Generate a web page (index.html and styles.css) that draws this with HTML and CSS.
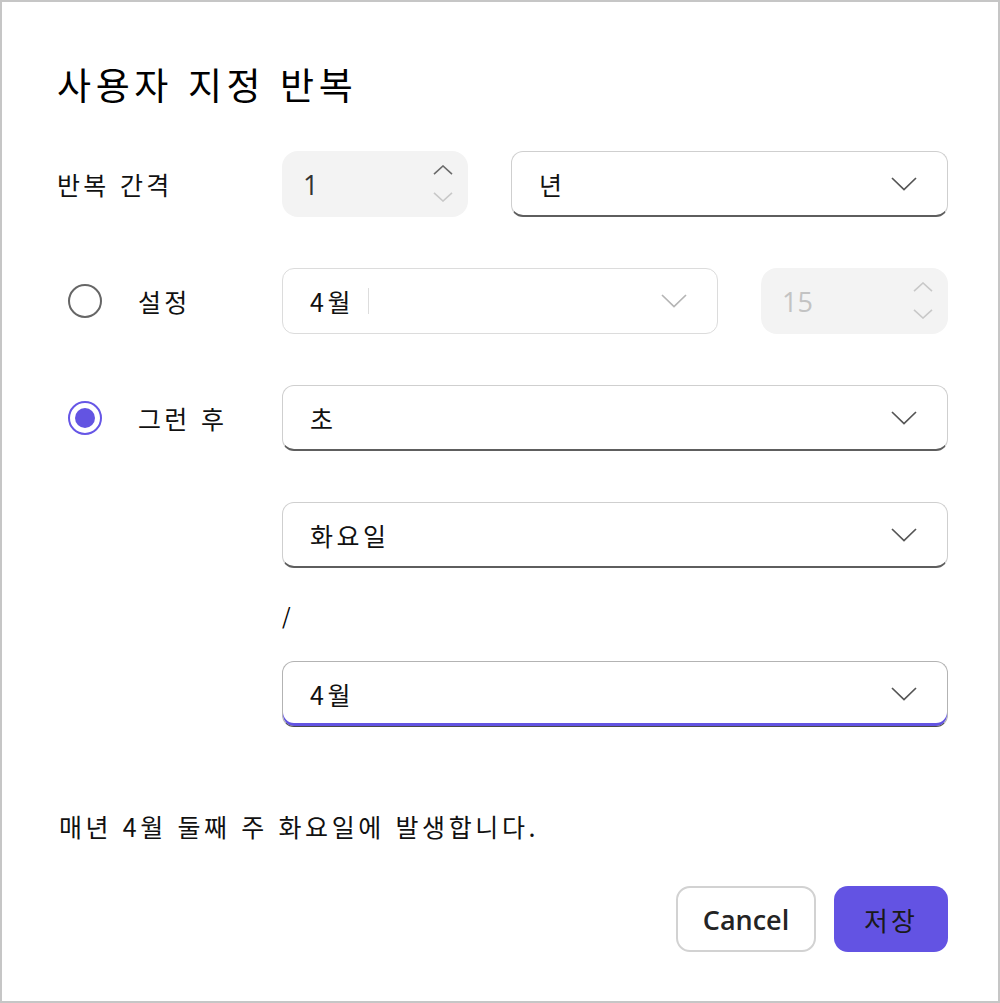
FILE: index.html
```html
<!DOCTYPE html>
<html lang="ko">
<head>
<meta charset="utf-8">
<title>사용자 지정 반복</title>
<link rel="stylesheet" href="styles.css">
</head>
<body>
<div class="dialog">
  <h1 class="title">사용자 지정 반복</h1>

  <div class="form">
    <div class="row">
      <div class="label">반복 간격</div>
      <div class="controls">
        <div class="spin spin-a">
          <span class="spin-value">1</span>
          <span class="spin-arrows">
            <svg class="arrow up" width="20" height="10" viewBox="0 0 20 10"><path d="M1 9.2 L10 1 L19 9.2"/></svg>
            <svg class="arrow off" width="20" height="10" viewBox="0 0 20 10"><path d="M1 0.8 L10 9 L19 0.8"/></svg>
          </span>
        </div>
        <div class="select grow">
          <span class="select-value">년</span>
          <svg class="chev" width="26" height="14" viewBox="0 0 26 14"><path d="M1 1 L13 12.6 L25 1"/></svg>
        </div>
      </div>
    </div>

    <div class="row gap">
      <div class="label radio-label">
        <span class="radio"></span>
        <span class="radio-text">설정</span>
      </div>
      <div class="controls">
        <div class="select select-soft grow">
          <span class="select-value">4월<span class="caret"></span></span>
          <svg class="chev chev-soft" width="26" height="14" viewBox="0 0 26 14"><path d="M1 1 L13 12.6 L25 1"/></svg>
        </div>
        <div class="spin spin-b">
          <span class="spin-value dim">15</span>
          <span class="spin-arrows">
            <svg class="arrow off" width="20" height="10" viewBox="0 0 20 10"><path d="M1 9.2 L10 1 L19 9.2"/></svg>
            <svg class="arrow off" width="20" height="10" viewBox="0 0 20 10"><path d="M1 0.8 L10 9 L19 0.8"/></svg>
          </span>
        </div>
      </div>
    </div>

    <div class="row gap">
      <div class="label radio-label">
        <span class="radio checked"></span>
        <span class="radio-text">그런 후</span>
      </div>
      <div class="controls">
        <div class="select grow">
          <span class="select-value">초</span>
          <svg class="chev" width="26" height="14" viewBox="0 0 26 14"><path d="M1 1 L13 12.6 L25 1"/></svg>
        </div>
      </div>
    </div>

    <div class="row gap">
      <div class="label"></div>
      <div class="controls">
        <div class="select grow">
          <span class="select-value">화요일</span>
          <svg class="chev" width="26" height="14" viewBox="0 0 26 14"><path d="M1 1 L13 12.6 L25 1"/></svg>
        </div>
      </div>
    </div>

    <div class="row slash-row">
      <div class="label"></div>
      <div class="slash-group">
        <div class="slash">/</div>
        <div class="select select-focus">
          <span class="select-value">4월</span>
          <svg class="chev" width="26" height="14" viewBox="0 0 26 14"><path d="M1 1 L13 12.6 L25 1"/></svg>
        </div>
      </div>
    </div>
  </div>

  <p class="summary">매년 4월 둘째 주 화요일에 발생합니다.</p>

  <div class="actions">
    <button class="btn btn-cancel" type="button">Cancel</button>
    <button class="btn btn-save" type="button">저장</button>
  </div>
</div>
</body>
</html>
```

FILE: styles.css
```css
* { box-sizing: border-box; }

html, body {
  margin: 0;
  padding: 0;
  background: #ffffff;
}

body {
  font-family: "Noto Sans CJK KR", "Noto Sans", sans-serif;
  color: #111111;
}

.dialog {
  width: 1000px;
  height: 1003px;
  border: 2px solid #c6c6c6;
  padding: 58px 50px 0 55px;
  display: flex;
  flex-direction: column;
}

.title {
  margin: 0;
  font-weight: 400;
  font-size: 37px;
  line-height: 48px;
  letter-spacing: 4.6px;
  color: #000;
}

.form {
  margin-top: 43px;
  display: flex;
  flex-direction: column;
}

.row {
  display: flex;
  align-items: center;
  height: 66px;
}

.row.gap { margin-top: 51px; }

.label {
  width: 225px;
  flex: none;
  font-size: 25px;
  line-height: 36px;
  letter-spacing: 3.3px;
  color: #111;
}

.radio-label {
  display: flex;
  align-items: center;
}

.radio {
  width: 34px;
  height: 34px;
  margin-left: 11px;
  border: 2px solid #666666;
  border-radius: 50%;
  flex: none;
  position: relative;
}

.radio.checked {
  border-color: #6656e6;
}

.radio.checked::after {
  content: "";
  position: absolute;
  left: 5px;
  top: 5px;
  width: 20px;
  height: 20px;
  border-radius: 50%;
  background: #6354e2;
}

.radio-text {
  margin-left: 36px;
}

.controls {
  flex: 1;
  display: flex;
  gap: 43px;
  height: 66px;
}

.grow { flex: 1; }

.spin {
  height: 66px;
  background: #f3f3f3;
  border-radius: 16px;
  display: flex;
  align-items: center;
  justify-content: space-between;
  padding: 0 15px 0 21px;
  flex: none;
}

.spin-a { width: 186px; }
.spin-b { width: 187px; }

.spin-value {
  font-family: "Open Sans", "Noto Sans", sans-serif;
  font-size: 27px;
  color: #333;
  line-height: 1;
}

.spin-value.dim { color: #c3c3c3; }

.spin-arrows {
  display: flex;
  flex-direction: column;
  gap: 17px;
  margin-top: -2px;
}

.arrow { display: block; }
.arrow path { fill: none; stroke: #6a6a6a; stroke-width: 1.6; }
.arrow.off path { stroke: #c8c8c8; }

.select {
  height: 66px;
  background: #fff;
  border: 1.5px solid #cfcfcf;
  border-bottom: 2px solid #5e5e5e;
  border-radius: 12px;
  display: flex;
  align-items: center;
  justify-content: space-between;
  padding: 0 30px 0 27px;
}

.select-soft {
  border: 1.5px solid #dcdcdc;
  flex: none;
  width: 436px;
}

.select-value {
  font-size: 25px;
  line-height: 36px;
  letter-spacing: 3.5px;
  color: #111;
  display: flex;
  align-items: center;
}

.caret {
  display: inline-block;
  width: 1px;
  height: 26px;
  background: #dddddd;
  margin-left: 14px;
}

.chev path { fill: none; stroke: #555; stroke-width: 1.7; }
.chev-soft path { stroke: #b5b5b5; }

.slash-row {
  height: auto;
  margin-top: 28px;
  align-items: flex-start;
}

.slash-group {
  flex: 1;
  display: flex;
  flex-direction: column;
}

.slash {
  font-size: 22px;
  line-height: 40px;
  color: #000;
}

.select-focus {
  margin-top: 25px;
  border: 1.5px solid #b3b3b3;
  border-bottom: 1px solid #4a4a4a;
  box-shadow: inset 0 -3px 0 #6354e2;
}

.summary {
  margin: 81px 0 0 2px;
  font-size: 25px;
  line-height: 36px;
  letter-spacing: 3.6px;
  color: #111;
}

.actions {
  margin-top: 42px;
  display: flex;
  justify-content: flex-end;
  gap: 18px;
}

.btn {
  height: 66px;
  border-radius: 14px;
  font-size: 27px;
  cursor: pointer;
  padding: 0;
}

.btn-cancel {
  width: 140px;
  background: #fff;
  border: 2px solid #d2d2d2;
  font-family: "Open Sans", "Noto Sans", sans-serif;
  font-weight: 600;
  color: #242424;
}

.btn-save {
  width: 114px;
  background: #6353e3;
  border: none;
  font-family: "Noto Sans CJK KR", sans-serif;
  font-weight: 400;
  font-size: 26px;
  letter-spacing: 3px;
  color: #1a1a1a;
}
```
